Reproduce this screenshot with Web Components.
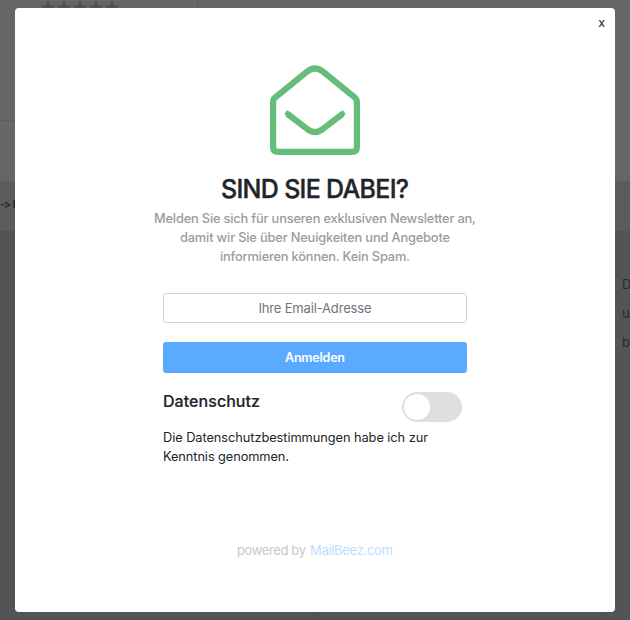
<!DOCTYPE html>
<html lang="de">
<head>
<meta charset="utf-8">
<title>Newsletter</title>
<style>
html,body{margin:0;height:100%;overflow:hidden}
body{font-family:Inter,"Liberation Sans",sans-serif;color:#212529;background:#545454}
</style>
</head>
<body>
<newsletter-page></newsletter-page>
<script>
const define = (name, html, init) => customElements.define(name, class extends HTMLElement {
  constructor() {
    super();
    this.attachShadow({mode: 'open'}).innerHTML = html;
  }
  connectedCallback() { if (init) init(this); }
});

/* One line of text, tracked so that it fills the width given in pixels. */
define('fit-line', `<style>:host{display:block;white-space:nowrap}span{display:inline-block}</style><span><slot></slot></span>`, el => {
  const span = el.shadowRoot.querySelector('span');
  const n = el.textContent.length, w = +el.getAttribute('width');
  span.style.letterSpacing = '0px';
  const s = (w - span.getBoundingClientRect().width) / (n - 1);
  span.style.letterSpacing = s + 'px';
  span.style.marginRight = -s + 'px';
});

define('shop-backdrop', `<style>
:host{display:grid;grid-template-rows:181px 50px 1fr;height:620px;width:630px;overflow:hidden;color:#2a2a2a}
.top{background:#666;display:grid;grid-template:121px 60px/198px 1fr;}
.stars{border-right:1px solid #5c5c5c;border-bottom:1px solid #5e5e5e;padding-left:40px;display:block}
.stars svg{display:block}
.crumb{background:#5c5c5c;font-size:11px;font-weight:700;line-height:47px;white-space:nowrap;display:flex;gap:3px;letter-spacing:-1.500px}
.body{background:#545454;display:flex;flex-direction:column;justify-content:space-between}
.side{align-self:flex-end;width:8px;padding-top:39px;font-size:13px;line-height:29px;white-space:nowrap;overflow:hidden}
.cols{display:grid;grid-template-columns:21px 293px 292px 1fr;height:8px}
.cols i+i{border-left:1px solid #4b4b4b}
</style>
<div class="top"><div class="stars"><svg width="80" height="15" fill="#525252"><defs><path id="s" d="M8 0l2 5.300 5.500.2-4.400 3.400 1.500 5.100L8 11.100l-4.600 2.900 1.500-5.100L.5 5.500l5.500-.2z"/></defs><use href="#s"/><use href="#s" x="16"/><use href="#s" x="32"/><use href="#s" x="48"/><use href="#s" x="64"/></svg></div></div>
<div class="crumb"><span>-&gt;</span> <b>I</b></div>
<div class="body"><div class="side">D<br>u<br>b</div><div class="cols"><i></i><i></i><i></i><i></i></div></div>`);

define('envelope-icon', `<style>:host{display:block;width:90px;height:90px}svg{display:block}</style>
<svg width="90" height="90" viewBox="0 0 90 90" fill="none" stroke="#66bc79" stroke-width="6.200"><path d="M3.100 36.500Q3.100 34.300 5 32.700L37 6.600Q45 .4 53 6.600L85 32.700Q86.900 34.300 86.900 36.500V81.900Q86.900 86.900 81.900 86.900H8.100Q3.100 86.900 3.100 81.900Z"/><path d="M17.300 48.800L37 63.900Q45 70.400 53 63.900L72.700 48.800"/><path d="M17.600 46.600L15.800 48.900L18 50.600ZM72.400 46.600L74.200 48.900L72 50.600Z" fill="#66bc79" stroke-linejoin="round" stroke-width="2.400"/></svg>`);

define('email-field', `<style>:host{display:block}
div{box-sizing:border-box;height:30px;border:1px solid #ced4da;border-radius:3px;text-align:center;font-size:13px;line-height:29px;color:#6c757d}</style>
<div><slot></slot></div>`);

define('submit-button', `<style>:host{display:block}
button{display:block;width:100%;height:31px;border:0;border-radius:3px;padding:0;background:#5aabff;color:#fff;font:600 12.500px/31px Inter,sans-serif}</style>
<button><slot></slot></button>`);

define('toggle-switch', `<style>:host{display:flex;box-sizing:border-box;width:60px;height:30px;border-radius:15px;padding:2px;background:#dfdfdf}
i{width:26px;height:26px;border-radius:50%;background:#fff}</style><i></i>`);

define('newsletter-modal', `<style>
:host{display:flex;flex-direction:column;align-items:center;box-sizing:border-box;width:600px;height:604px;border-radius:4px;background:#fff}
.close{align-self:flex-end;margin:7px 10px 0 0;height:16px;font-size:12.500px;line-height:16px;color:#111;font-weight:400}
envelope-icon{margin-top:34px}
h1{margin:17px 0 0;font-size:25px;line-height:34px;font-weight:500;-webkit-text-stroke:.4px #212529}
.lead{margin-top:3px;font-size:12.800px;line-height:19px;color:#9b9b9b;font-weight:500;text-align:center;display:flex;flex-direction:column;align-items:center}
form{width:304px;margin:27px 0 0}
submit-button{margin-top:19px}
.row{display:flex;justify-content:space-between;padding-right:5px;margin-top:19px}
h2{margin:0;font-size:16px;line-height:19px;font-weight:500;-webkit-text-stroke:.2px #212529}
.terms{margin-top:6px;font-size:12.800px;line-height:19px}
.foot{margin-top:75px;display:flex;gap:4px;font-size:13px;line-height:19px;color:#c8c8c8}
.foot a{color:#bcdeff}
</style>
<div class="close">x</div>
<envelope-icon></envelope-icon>
<h1><fit-line width="188">SIND SIE DABEI?</fit-line></h1>
<div class="lead"><fit-line width="322">Melden Sie sich für unseren exklusiven Newsletter an,</fit-line><fit-line width="270">damit wir Sie über Neuigkeiten und Angebote</fit-line><fit-line width="190">informieren können. Kein Spam.</fit-line></div>
<form><email-field><fit-line width="113">Ihre Email-Adresse</fit-line></email-field>
<submit-button><fit-line width="60">Anmelden</fit-line></submit-button>
<div class="row"><h2><fit-line width="97">Datenschutz</fit-line></h2><toggle-switch></toggle-switch></div>
<div class="terms"><fit-line width="265">Die Datenschutzbestimmungen habe ich zur</fit-line><fit-line width="126">Kenntnis genommen.</fit-line></div></form>
<div class="foot"><fit-line width="69">powered by</fit-line><a><fit-line width="83">MailBeez.com</fit-line></a></div>`);

/* The dialog lies over the dimmed shop page. */
define('newsletter-page', `<style>:host{display:block;position:relative;width:630px;height:620px}
newsletter-modal{position:absolute;left:15px;top:8px}</style>
<shop-backdrop></shop-backdrop><newsletter-modal></newsletter-modal>`);
</script>
</body>
</html>
